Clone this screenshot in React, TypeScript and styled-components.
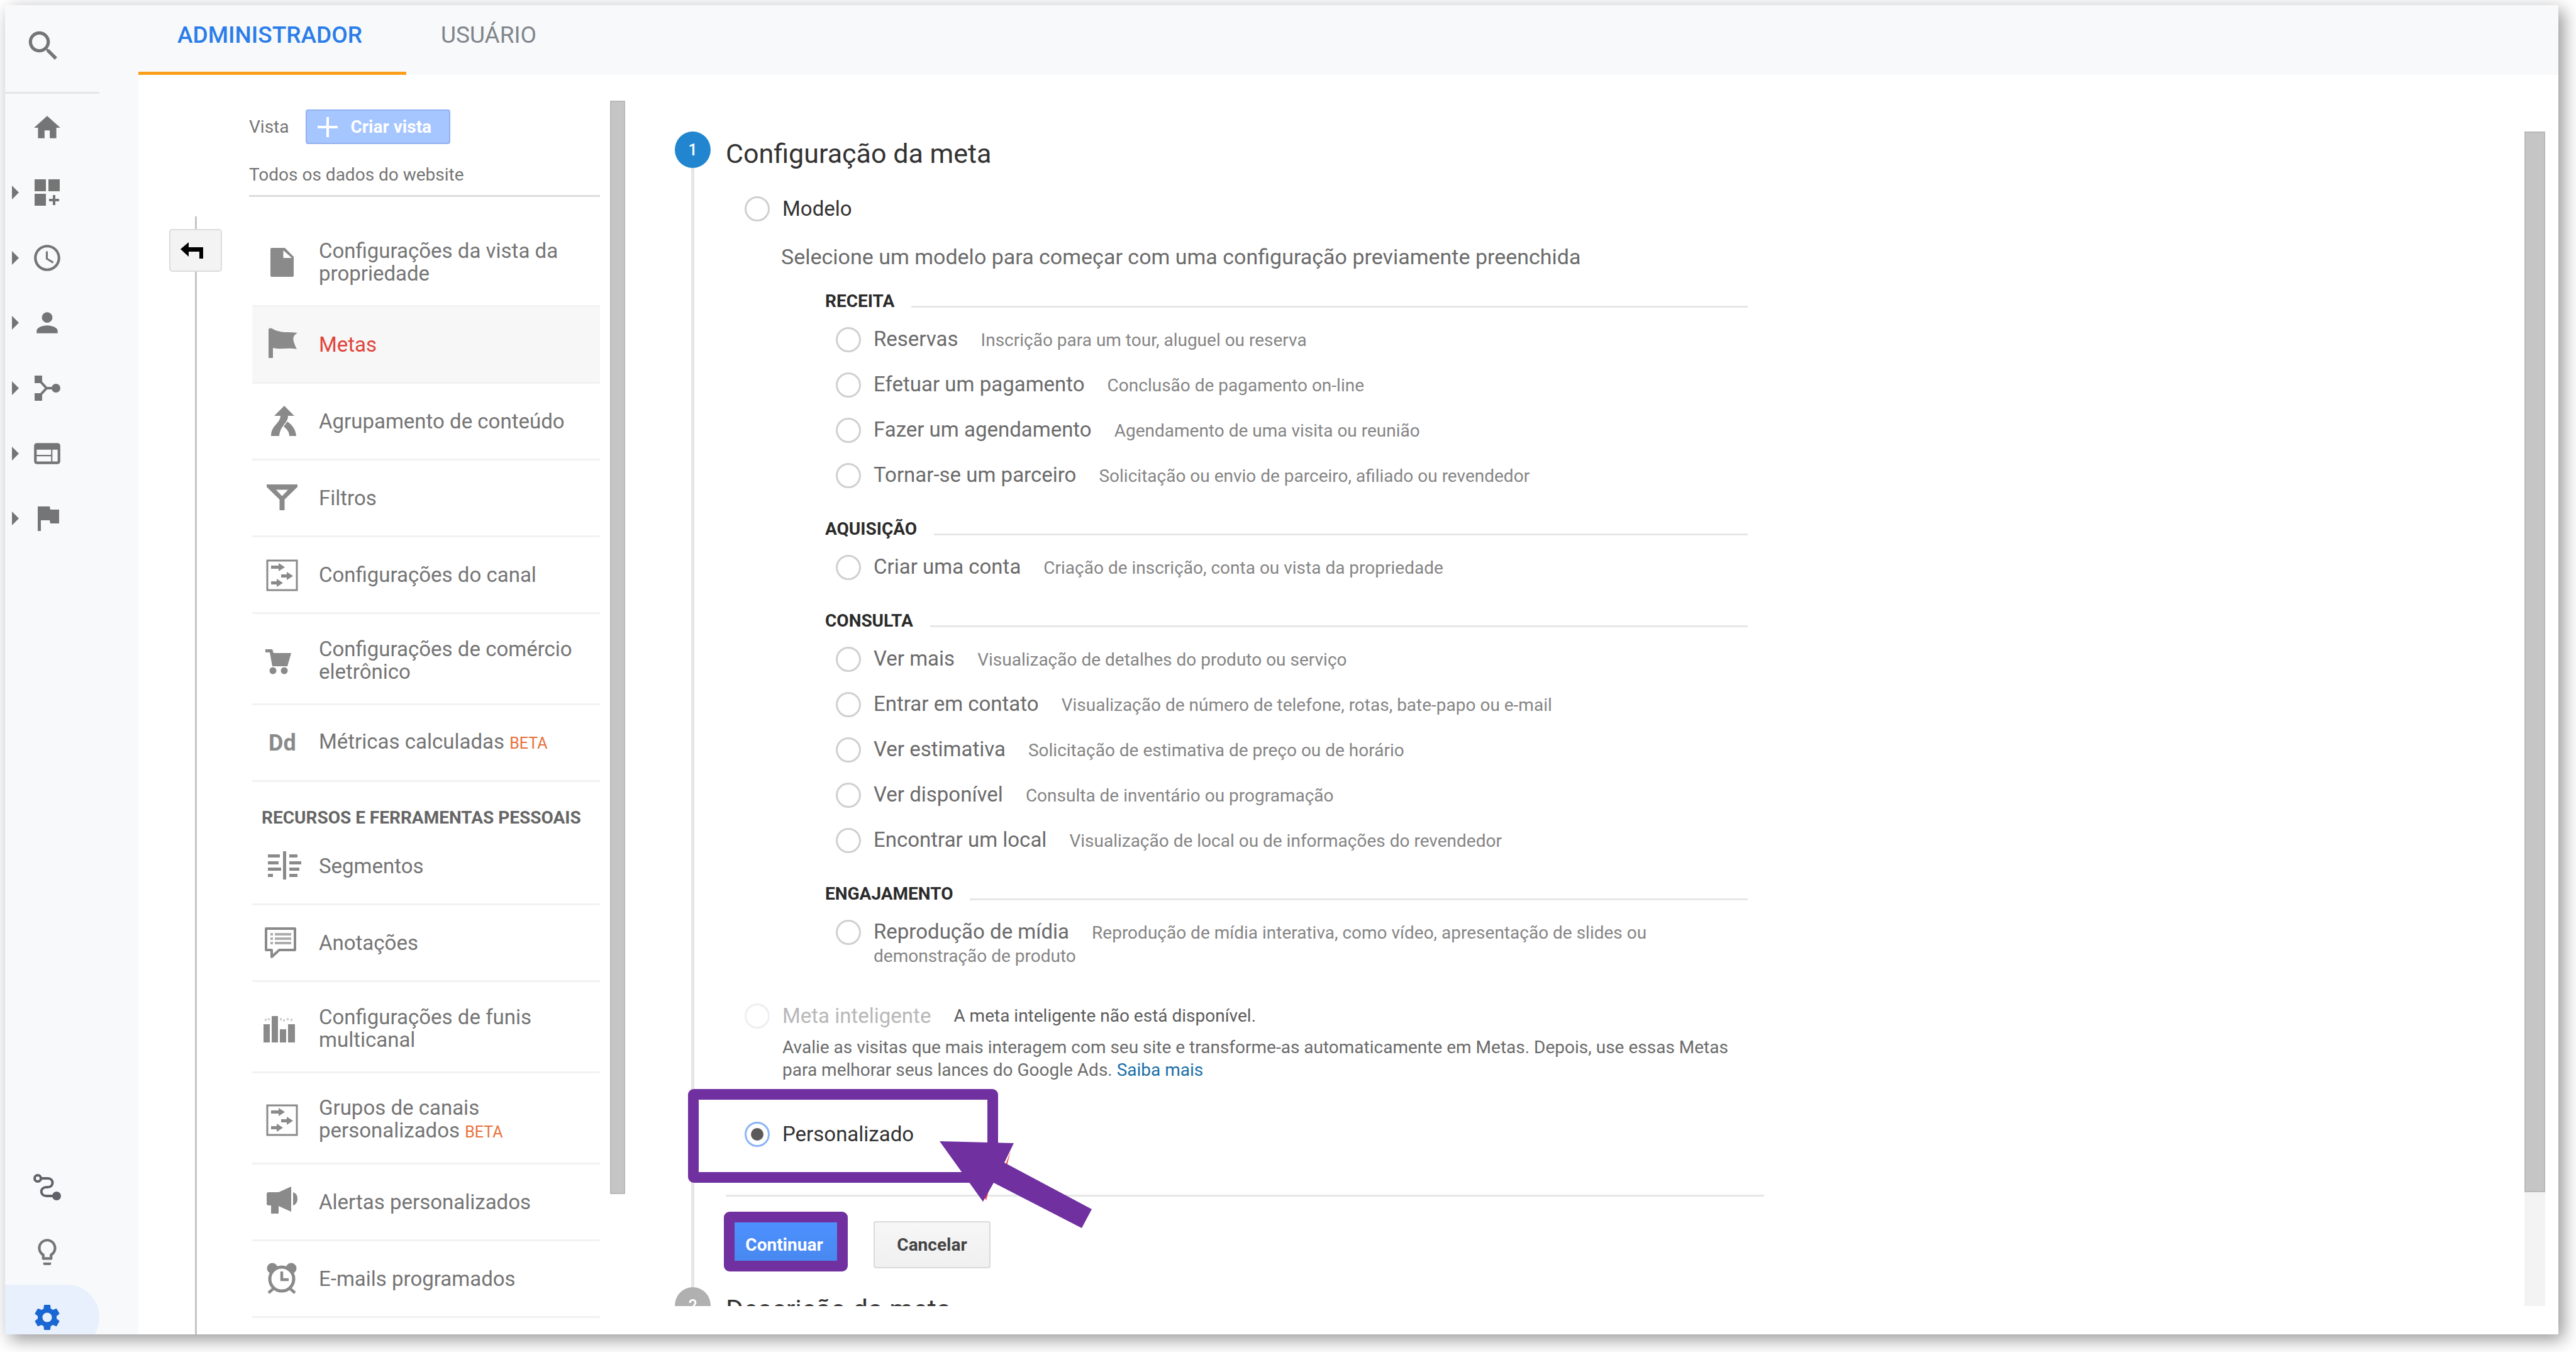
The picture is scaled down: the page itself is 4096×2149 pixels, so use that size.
import React from 'react';
import styled, { createGlobalStyle, css } from 'styled-components';
import {
  MdAccessTime,
  MdHome,
  MdLightbulbOutline,
  MdPerson,
  MdSearch,
  MdSettings,
  MdWeb,
} from 'react-icons/md';

const color = {
  chrome: '#f8f9fb',
  icon: '#757575',
  menuIcon: '#8a8a8a',
  text: '#757575',
  strong: '#333',
  rule: '#e6e6e6',
  mark: '#7030a0',
};

const GlobalStyle = createGlobalStyle`
  *, *::before, *::after { box-sizing: border-box; }
  body {
    margin: 0;
    background: #fff;
    color: ${color.text};
    font-family: Roboto, 'Liberation Sans', sans-serif;
    font-size: 28px;
    line-height: 36px;
  }
  button { font-family: inherit; margin: 0; padding: 0; border: 0; background: none; cursor: pointer; }
  ul { list-style: none; margin: 0; padding: 0; }
  h1, h2, h3, p { margin: 0; font-weight: 400; }
  a { color: inherit; text-decoration: none; }
  svg { display: block; flex: none; }
`;

/* ---------- frame ---------- */

const Page = styled.div`
  display: flex;
  height: 100vh;
  padding: 8px 28px 28px 8px;
  overflow: hidden;
`;

const Frame = styled.div`
  flex: 1;
  display: grid;
  grid-template-columns: 212px 1fr;
  min-width: 0;
  overflow: hidden;
  background: #fff;
  box-shadow: 8px 8px 26px rgba(0, 0, 0, 0.42);
`;

/* ---------- sidebar ---------- */

const Sidebar = styled.nav`
  display: flex;
  flex-direction: column;
  align-items: flex-start;
  min-height: 0;
  background: ${color.chrome};
  color: ${color.icon};
`;

const SearchButton = styled.button`
  flex: none;
  display: flex;
  align-items: center;
  width: 150px;
  height: 141px;
  padding: 0 0 8px 30px;
  border-bottom: 3px solid ${color.rule};
  color: ${color.icon};
`;

const NavList = styled.ul<{ $bottom?: boolean }>`
  flex: none;
  display: grid;
  grid-auto-rows: 1fr;
  width: 150px;
  height: ${p => (p.$bottom ? 311 : 725)}px;
  ${p => p.$bottom ? css`
    margin-top: auto;
    margin-bottom: -25px;
  ` : css`
    margin-top: 2px;
  `}
`;

const NavLink = styled.a<{ $active?: boolean }>`
  display: flex;
  align-items: center;
  gap: 20px;
  height: 100%;
  padding-left: 11px;
  border-radius: 0 52px 52px 0;
  background: ${p => (p.$active ? '#e8f0fe' : 'transparent')};
  color: ${p => (p.$active ? '#1967d2' : 'inherit')};
`;

const Caret = styled.span<{ $shown?: boolean }>`
  border: 11px solid transparent;
  border-left-color: ${p => (p.$shown ? color.icon : 'transparent')};
  border-right-width: 0;
`;

const DashboardIcon = () => (
  <svg width="50" height="50" viewBox="0 0 50 50" fill="currentColor">
    <path d="M5 4h18v19H5zM27 4h18v19H27zM5 27h18v19H5zM34 29h4v6h6v4h-6v6h-4v-6h-6v-4h6z" />
  </svg>
);

const BranchIcon = () => (
  <svg width="50" height="50" viewBox="0 0 50 50" fill="currentColor">
    <path d="M5 5h12v12H5zM5 33h12v12H5z" />
    <circle cx="39" cy="25" r="7" />
    <path d="M12 12l12 13L12 38M24 25h13" fill="none" stroke="currentColor" strokeWidth="4" />
  </svg>
);

const FlagIcon = () => (
  <svg width="50" height="50" viewBox="0 0 50 50" fill="currentColor">
    <path d="M10 6h19l1 5h14v22H30l-1-5H15v17h-5z" />
  </svg>
);

const RouteIcon = () => (
  <svg width="50" height="50" viewBox="0 0 50 50" fill="none" stroke="#5f6368" strokeWidth="4">
    <circle cx="10" cy="11" r="5" />
    <path d="M15 11h11c10 0 10 14 0 14h-2c-11 0-11 14 0 14h12" />
    <circle cx="40" cy="39" r="5" fill="#5f6368" />
  </svg>
);

const sections = [
  { name: 'Página inicial', icon: <MdHome size={50} />, caret: false },
  { name: 'Personalização', icon: <DashboardIcon />, caret: true },
  { name: 'Tempo real', icon: <MdAccessTime size={50} />, caret: true },
  { name: 'Público-alvo', icon: <MdPerson size={50} />, caret: true },
  { name: 'Aquisição', icon: <BranchIcon />, caret: true },
  { name: 'Comportamento', icon: <MdWeb size={50} />, caret: true },
  { name: 'Conversões', icon: <FlagIcon />, caret: true },
];

const tools = [
  { name: 'Atribuição', icon: <RouteIcon /> },
  { name: 'Descobrir', icon: <MdLightbulbOutline size={50} /> },
  { name: 'Administrador', icon: <MdSettings size={50} />, active: true },
];

/* ---------- tabs ---------- */

const Main = styled.main`
  display: flex;
  flex-direction: column;
  min-width: 0;
  min-height: 0;
`;

const TabBar = styled.header`
  flex: none;
  display: flex;
  height: 111px;
  background: ${color.chrome};
`;

const Tab = styled.button<{ $active?: boolean }>`
  display: flex;
  align-items: flex-start;
  padding: 26px ${p => (p.$active ? '70px 0 62px' : '55px 0')};
  border-bottom: 5px solid ${p => (p.$active ? '#fb9e1b' : 'transparent')};
  color: ${p => (p.$active ? '#2b7de9' : '#80868b')};
  font-size: 37px;
  font-weight: ${p => (p.$active ? 500 : 400)};
  line-height: 44px;
`;

const Body = styled.div`
  flex: 1;
  display: flex;
  min-height: 0;
`;

/* ---------- view column ---------- */

const BackRail = styled.div`
  flex: none;
  display: flex;
  flex-direction: column;
  align-items: center;
  width: 84px;
  margin-left: 49px;
  padding-top: 225px;
`;

const RailLine = styled.div<{ $grow?: boolean }>`
  width: 3px;
  ${p => (p.$grow ? 'flex: 1' : 'height: 20px')};
  background: #c4c4c4;
`;

const BackButton = styled.button`
  display: flex;
  align-items: center;
  justify-content: center;
  width: 84px;
  height: 68px;
  padding-right: 12px;
  border: 2px solid #dcdcdc;
  border-radius: 5px;
  background: #f3f3f3;
`;

const ViewColumn = styled.section`
  flex: none;
  width: 558px;
  margin: 0 16px 0 43px;
  padding-top: 55px;
  overflow: hidden;
`;

const ViewHeader = styled.div`
  display: flex;
  align-items: center;
  gap: 27px;
  height: 55px;
`;

const CreateButton = styled.button`
  display: flex;
  align-items: center;
  gap: 20px;
  height: 55px;
  padding: 0 28px 0 17px;
  border: 2px solid #93b1ee;
  border-radius: 4px;
  background: #a6c6ff;
  color: #fff;
  font-size: 28px;
  font-weight: 700;
  line-height: 36px;
`;

const ViewName = styled.p`
  margin-top: 31px;
  padding-bottom: 14px;
  border-bottom: 3px solid #dcdcdc;
`;

const Menu = styled.ul`
  padding-left: 5px;
  &:first-of-type { margin-top: 30px; }
`;

const MenuLink = styled.a<{ $active?: boolean; $tall?: boolean }>`
  display: flex;
  align-items: center;
  gap: 32px;
  height: ${p => (p.$tall ? 145 : 122)}px;
  padding: ${p => (p.$tall ? 6 : 0)}px 0 0 20px;
  border-bottom: 3px solid #f2f2f2;
  background: ${p => (p.$active ? '#f7f7f7' : 'transparent')};
  color: ${p => (p.$active ? '#e0443a' : color.text)};
  font-size: 33px;
  line-height: 36px;
  svg { overflow: visible; color: ${color.menuIcon}; }
`;

const TextIcon = styled.span`
  width: 54px;
  padding-left: 6px;
  color: ${color.menuIcon};
  font-size: 36px;
  font-weight: 700;
`;

const Beta = styled.span`
  color: #e8703a;
  font-size: 25px;
`;

const MenuHeading = styled.h3`
  height: 74px;
  padding: 40px 0 0 20px;
  color: #666;
  font-size: 28px;
  font-weight: 700;
  line-height: 34px;
  white-space: nowrap;
`;

const Scrollbar = styled.div<{ $width: number; $margin: string; $track: string }>`
  flex: none;
  width: ${p => p.$width}px;
  margin: ${p => p.$margin};
  background: ${p => p.$track};
`;

const ScrollThumb = styled.div<{ $size: string }>`
  height: ${p => p.$size};
  border: 2px solid #b9b9b9;
  background: #c5c5c5;
`;

const Art = ({ children }: { children: React.ReactNode }) => (
  <svg width="54" height="54" viewBox="0 0 54 54" fill="currentColor">{children}</svg>
);

const channelArt = (
  <Art>
    <rect x="4" y="4" width="47" height="47" fill="none" stroke="currentColor" strokeWidth="3" />
    <path d="M10 12h12V8l10 6.500-10 6.500v-4H10zM26 26h9v-4l10 6.500-10 6.500v-4h-9zM10 37h9v-4l10 6.500-10 6.500v-4h-9z" />
  </Art>
);

type MenuEntry = {
  label: string;
  icon: React.ReactNode;
  tall?: boolean;
  active?: boolean;
  beta?: boolean;
};

const viewItems: MenuEntry[] = [
  {
    label: 'Configurações da vista da propriedade',
    tall: true,
    icon: (
      <Art>
        <path fillRule="evenodd" d="M11 4h21l14 14v30q0 2-2 2H11q-2 0-2-2V6q0-2 2-2zM29.500 8v12H43z" />
      </Art>
    ),
  },
  {
    label: 'Metas',
    active: true,
    icon: (
      <Art>
        <path d="M6 2q3-3 7 0c12 7 24 4 39 6-8 5-9 10-1 26-14-3-25 1-38-2v16H6z" />
      </Art>
    ),
  },
  {
    label: 'Agrupamento de conteúdo',
    icon: (
      <Art>
        <path d="M31 2l16 16H37c0 12-12 14-14 32H10c0-17 14-19 15-32H15zM36 27c8 6 13 12 14 23H39c0-7-4-11-9-15z" />
      </Art>
    ),
  },
  {
    label: 'Filtros',
    icon: (
      <Art>
        <path fillRule="evenodd" d="M3 5h49v4L31.500 29v17h-8V29L3 9zM18 13.500l9.500 10 9.500-10z" />
      </Art>
    ),
  },
  { label: 'Configurações do canal', icon: channelArt },
  {
    label: 'Configurações de comércio eletrônico',
    tall: true,
    icon: (
      <Art>
        <path d="M1 9h11l2 6h28l-6 21H12L8 14H1z" />
        <circle cx="13" cy="43" r="5.500" />
        <circle cx="31" cy="43" r="5.500" />
      </Art>
    ),
  },
  { label: 'Métricas calculadas', beta: true, icon: <TextIcon>Dd</TextIcon> },
];

const personalItems: MenuEntry[] = [
  {
    label: 'Segmentos',
    icon: (
      <Art>
        <path d="M29 3h5v45h-5zM5 8h19v5H5zM5 19h17v5H5zM5 29h21v5H5zM5 39h8v5H5zM39 8h13v5H39zM39 19h19v5H39zM39 29h16v5H39zM39 39h13v5H39z" />
      </Art>
    ),
  },
  {
    label: 'Anotações',
    icon: (
      <Art>
        <path d="M2 4h46v34H23L11 49V38H2z" fill="none" stroke="currentColor" strokeWidth="4" strokeLinejoin="round" />
        <path d="M9 11h4v4H9zM9 18h4v4H9zM9 25h4v4H9zM16 11h26v4H16zM16 18h26v4H16zM16 25h26v4H16z" opacity=".7" />
      </Art>
    ),
  },
  {
    label: 'Configurações de funis multicanal',
    tall: true,
    icon: (
      <Art>
        <path d="M-2 20H8v29H-2zM11 7h10v42H11zM24 28h10v21H24zM37 20h11v29H37z" />
        <path d="M0 13h3M5 12h3M24 12h3M29 14h3M35 12h3M41 13h3" stroke="currentColor" strokeWidth="3" opacity=".5" />
      </Art>
    ),
  },
  { label: 'Grupos de canais personalizados', tall: true, beta: true, icon: channelArt },
  {
    label: 'Alertas personalizados',
    icon: (
      <Art>
        <path d="M3 14q0-3 3-3h16L42 2v40L22 33v12H10V32H6q-3 0-3-3zM45 11q7 2 7 10.500T45 32z" />
      </Art>
    ),
  },
  {
    label: 'E-mails programados',
    icon: (
      <Art>
        <circle cx="12" cy="10" r="8.500" />
        <circle cx="42" cy="10" r="8.500" />
        <circle cx="27" cy="27" r="19" fill="#fff" stroke="currentColor" strokeWidth="5" />
        <path d="M27 15v13h11M14 42l-8 7M40 42l8 7" fill="none" stroke="currentColor" strokeWidth="4.500" />
      </Art>
    ),
  },
];

const MenuList = ({ items }: { items: MenuEntry[] }) => (
  <Menu>
    {items.map(item => (
      <li key={item.label}>
        <MenuLink href="#" $active={item.active} $tall={item.tall}>
          {item.icon}
          <span>
            {item.label} {item.beta && <Beta>BETA</Beta>}
          </span>
        </MenuLink>
      </li>
    ))}
  </Menu>
);

/* ---------- goal form ---------- */

const GoalPanel = styled.section`
  flex: 1;
  min-width: 0;
  margin: 90px 0 45px 79px;
  overflow: hidden;
`;

const Step = styled.div`
  display: grid;
  grid-template-columns: 57px minmax(0, 1651px);
  column-gap: 24px;
`;

const StepTrack = styled.div`
  display: flex;
  flex-direction: column;
  align-items: center;
`;

const StepNumber = styled.span<{ $active?: boolean }>`
  flex: none;
  width: 57px;
  height: 58px;
  border-radius: 50%;
  background: ${p => (p.$active ? '#2186cf' : '#b0b0b0')};
  color: #fff;
  font-size: 25px;
  font-weight: 500;
  line-height: 60px;
  text-align: center;
`;

const StepLine = styled.div`
  flex: 1;
  width: 5px;
  background: ${color.rule};
`;

const StepBody = styled.div`
  padding: 10px 0 30px;
`;

const StepTitle = styled.h2`
  color: ${color.strong};
  font-size: 43px;
  line-height: 50px;
`;

const Choice = styled.div<{ $top: number }>`
  position: relative;
  display: flex;
  align-items: center;
  gap: 20px;
  height: 40px;
  margin: ${p => p.$top}px 0 0 30px;
`;

const Radio = styled.input.attrs({ type: 'radio' })`
  appearance: none;
  flex: none;
  display: grid;
  place-items: center;
  width: 40px;
  height: 40px;
  margin: 0;
  border: 3px solid #d0d0d0;
  border-radius: 50%;
  background: #fff;
  &:disabled { border-color: #efefef; }
  &:checked { border-color: #8bb4f8; }
  &:checked::before {
    content: '';
    width: 20px;
    height: 20px;
    border-radius: 50%;
    background: #5a5a5a;
  }
`;

const ChoiceLabel = styled.label<{ $muted?: boolean }>`
  color: ${p => (p.$muted ? '#b8b8b8' : color.strong)};
  font-size: 33px;
  line-height: 40px;
`;

const ChoiceNote = styled.span`
  padding-left: 16px;
  color: #5c5c5c;
`;

const Intro = styled.p`
  margin: 36px 0 2px 88px;
  color: #6b6b6b;
  font-size: 34px;
  line-height: 40px;
`;

const Group = styled.fieldset`
  min-width: 0;
  margin: 0 26px 0 158px;
  padding: 0;
  border: 0;
`;

const GroupHeader = styled.div`
  display: flex;
  align-items: flex-end;
  gap: 27px;
  height: 74px;
  padding-bottom: 9px;
`;

const GroupName = styled.h3`
  color: #2b2b2b;
  font-size: 28px;
  font-weight: 700;
  line-height: 32px;
`;

const GroupRule = styled.div`
  flex: 1;
  height: 3px;
  margin-bottom: 6px;
  background: ${color.rule};
`;

const Option = styled.div`
  display: grid;
  grid-template-columns: 40px 1fr;
  gap: 20px;
  min-height: 72px;
  padding: 16px 0 0 17px;
`;

const OptionLabel = styled.label`
  color: #858585;
  font-size: 28px;
  line-height: 37px;
`;

const OptionName = styled.span`
  margin-right: 36px;
  color: #6b6b6b;
  font-size: 33px;
`;

const SmartNote = styled.p`
  margin: 12px 0 0 90px;
  color: #6b6b6b;
  a { color: #1b6fa8; }
`;

const Divider = styled.hr`
  height: 3px;
  margin: 76px 0 0;
  border: 0;
  background: ${color.rule};
`;

const Actions = styled.div`
  display: flex;
  gap: 49px;
  margin-top: 39px;
`;

const ActionSlot = styled.div`
  position: relative;
`;

const ActionButton = styled.button<{ $primary?: boolean }>`
  display: block;
  width: 186px;
  height: 75px;
  border: 2px solid ${p => (p.$primary ? '#3079ed' : '#dadada')};
  border-radius: 4px;
  background: ${p => (p.$primary
    ? 'linear-gradient(#4d90fe, #4787ed)'
    : 'linear-gradient(#f6f6f6, #f0f0f0)')};
  color: ${p => (p.$primary ? '#fff' : '#444')};
  font-size: 28px;
  font-weight: 700;
  line-height: 36px;
`;

/* Purple annotation drawn around a control. */
const Highlight = styled.div<{ $top: number; $left: number; $width: number; $height: number }>`
  position: absolute;
  top: ${p => p.$top}px;
  left: ${p => p.$left}px;
  width: ${p => p.$width}px;
  height: ${p => p.$height}px;
  border: 17px solid ${color.mark};
  border-radius: 9px;
  pointer-events: none;
`;

const Pointer = styled.svg`
  position: absolute;
  top: 31px;
  left: 310px;
  z-index: 1;
  pointer-events: none;
`;

const groups = [
  {
    name: 'RECEITA',
    options: [
      ['Reservas', 'Inscrição para um tour, aluguel ou reserva'],
      ['Efetuar um pagamento', 'Conclusão de pagamento on-line'],
      ['Fazer um agendamento', 'Agendamento de uma visita ou reunião'],
      ['Tornar-se um parceiro', 'Solicitação ou envio de parceiro, afiliado ou revendedor'],
    ],
  },
  {
    name: 'AQUISIÇÃO',
    options: [['Criar uma conta', 'Criação de inscrição, conta ou vista da propriedade']],
  },
  {
    name: 'CONSULTA',
    options: [
      ['Ver mais', 'Visualização de detalhes do produto ou serviço'],
      ['Entrar em contato', 'Visualização de número de telefone, rotas, bate-papo ou e-mail'],
      ['Ver estimativa', 'Solicitação de estimativa de preço ou de horário'],
      ['Ver disponível', 'Consulta de inventário ou programação'],
      ['Encontrar um local', 'Visualização de local ou de informações do revendedor'],
    ],
  },
  {
    name: 'ENGAJAMENTO',
    options: [
      [
        'Reprodução de mídia',
        'Reprodução de mídia interativa, como vídeo, apresentação de slides ou demonstração de produto',
      ],
    ],
  },
];

const GoalForm = () => (
  <GoalPanel>
    <Step>
      <StepTrack>
        <StepNumber $active>1</StepNumber>
        <StepLine />
      </StepTrack>
      <StepBody>
        <StepTitle>Configuração da meta</StepTitle>
        <Choice $top={43}>
          <Radio id="modelo" name="meta" />
          <ChoiceLabel htmlFor="modelo">Modelo</ChoiceLabel>
        </Choice>
        <Intro>Selecione um modelo para começar com uma configuração previamente preenchida</Intro>
        {groups.map(group => (
          <Group key={group.name} aria-label={group.name}>
            <GroupHeader>
              <GroupName>{group.name}</GroupName>
              <GroupRule />
            </GroupHeader>
            {group.options.map(([name, detail]) => (
              <Option key={name}>
                <Radio id={name} name="meta" />
                <OptionLabel htmlFor={name}>
                  <OptionName>{name}</OptionName>
                  {detail}
                </OptionLabel>
              </Option>
            ))}
          </Group>
        ))}
        <Choice $top={57}>
          <Radio id="inteligente" name="meta" disabled />
          <ChoiceLabel htmlFor="inteligente" $muted>Meta inteligente</ChoiceLabel>
          <ChoiceNote>A meta inteligente não está disponível.</ChoiceNote>
        </Choice>
        <SmartNote>
          Avalie as visitas que mais interagem com seu site e transforme-as automaticamente em
          Metas. Depois, use essas Metas para melhorar seus lances do Google Ads.{' '}
          <a href="#">Saiba mais</a>
        </SmartNote>
        <Choice $top={64}>
          <Radio id="personalizado" name="meta" defaultChecked />
          <ChoiceLabel htmlFor="personalizado">Personalizado</ChoiceLabel>
          <Highlight $top={-52} $left={-90} $width={493} $height={149} />
          <Pointer width="242" height="139" viewBox="0 0 242 139">
            <path d="M113 15l-15 42 4 2zM82 64l-8 30-6-12z" fill="#ff3b3b" />
            <path d="M0 0l118 3-15 31 139 74-16 30L86 66 69 96z" fill={color.mark} />
          </Pointer>
        </Choice>
        <Divider />
        <Actions>
          <ActionSlot>
            <ActionButton type="button" $primary>Continuar</ActionButton>
            <Highlight $top={-15} $left={-3} $width={197} $height={95} />
          </ActionSlot>
          <ActionButton type="button">Cancelar</ActionButton>
        </Actions>
      </StepBody>
    </Step>
    <Step>
      <StepTrack>
        <StepNumber>2</StepNumber>
      </StepTrack>
      <StepBody>
        <StepTitle>Descrição da meta</StepTitle>
      </StepBody>
    </Step>
  </GoalPanel>
);

export default function App() {
  return (
    <Page>
      <GlobalStyle />
      <Frame>
        <Sidebar>
          <SearchButton aria-label="Pesquisar">
            <MdSearch size={62} />
          </SearchButton>
          <NavList>
            {sections.map(s => (
              <li key={s.name}>
                <NavLink href="#" aria-label={s.name}>
                  <Caret $shown={s.caret} />
                  {s.icon}
                </NavLink>
              </li>
            ))}
          </NavList>
          <NavList $bottom>
            {tools.map(t => (
              <li key={t.name}>
                <NavLink href="#" aria-label={t.name} $active={t.active}>
                  <Caret />
                  {t.icon}
                </NavLink>
              </li>
            ))}
          </NavList>
        </Sidebar>
        <Main>
          <TabBar>
            <Tab $active>ADMINISTRADOR</Tab>
            <Tab>USUÁRIO</Tab>
          </TabBar>
          <Body>
            <BackRail>
              <RailLine />
              <BackButton aria-label="Voltar">
                <svg width="36" height="26" viewBox="0 0 36 26" fill="#000">
                  <path d="M0 11L13 0v8h23v18h-6V15H13v8z" />
                </svg>
              </BackButton>
              <RailLine $grow />
            </BackRail>
            <ViewColumn>
              <ViewHeader>
                <span>Vista</span>
                <CreateButton>
                  <svg width="32" height="32" viewBox="0 0 32 32" stroke="#fff" strokeWidth="4">
                    <path d="M16 0v32M0 16h32" />
                  </svg>
                  Criar vista
                </CreateButton>
              </ViewHeader>
              <ViewName>Todos os dados do website</ViewName>
              <MenuList items={viewItems} />
              <MenuHeading>RECURSOS E FERRAMENTAS PESSOAIS</MenuHeading>
              <MenuList items={personalItems} />
            </ViewColumn>
            <Scrollbar $width={24} $margin="41px 0 223px" $track="transparent">
              <ScrollThumb $size="100%" />
            </Scrollbar>
            <GoalForm />
            <Scrollbar $width={33} $margin="90px 21px 45px 0" $track="#f3f3f3">
              <ScrollThumb $size="90.3%" />
            </Scrollbar>
          </Body>
        </Main>
      </Frame>
    </Page>
  );
}
